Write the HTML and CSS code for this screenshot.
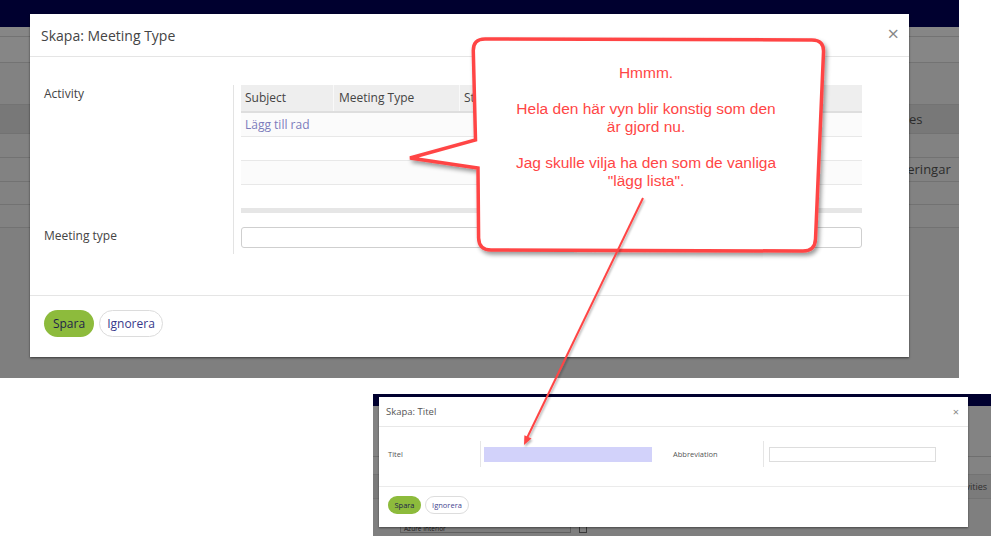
FILE: index.html
```html
<!DOCTYPE html>
<html lang="sv">
<head>
<meta charset="utf-8">
<title>Skapa: Meeting Type</title>
<link rel="stylesheet" href="styles.css">
</head>
<body>
<div class="canvas">

  <section class="shot shot-main">
    <div class="page">
      <div class="topbar"></div>
      <div class="pbar pbar-a"></div>
      <div class="pbar pbar-b"></div>
      <div class="pbar pbar-c"></div>
      <div class="prow prow-head"><span class="pcell pcell-act">Activities</span></div>
      <div class="prow"></div>
      <div class="prow"><span class="pcell pcell-not">Noteringar</span></div>
      <div class="prow prow-short"></div>
      <div class="prow prow-short"></div>
    </div>

    <div class="modal">
      <div class="modal-header">
        <h4 class="modal-title">Skapa: Meeting Type</h4>
        <span class="close">&times;</span>
      </div>
      <div class="modal-body">
        <div class="form-row">
          <div class="form-label">Activity</div>
          <div class="form-field field-grid">
            <div class="grid">
              <div class="grid-head">
                <div class="gh gh-subject">Subject</div>
                <div class="gh gh-type">Meeting Type</div>
                <div class="gh gh-rest">Status</div>
              </div>
              <div class="grid-row grid-row-a"><a class="add-row">Lägg till rad</a></div>
              <div class="grid-row"></div>
              <div class="grid-row grid-row-a"></div>
              <div class="grid-row grid-row-last"></div>
              <div class="grid-foot"></div>
            </div>
          </div>
        </div>
        <div class="form-row">
          <div class="form-label">Meeting type</div>
          <div class="form-field field-input">
            <div class="input"></div>
          </div>
        </div>
      </div>
      <div class="modal-footer">
        <button class="btn btn-primary">Spara</button>
        <button class="btn btn-default">Ignorera</button>
      </div>
    </div>
  </section>

  <section class="shot shot-sub">
    <div class="page2">
      <div class="topbar2"></div>
      <div class="p2bar"></div>
      <div class="p2row"></div>
      <div class="p2row p2row-head"><span class="p2cell">Activities</span></div>
      <div class="p2rest">
        <div class="p2input">Azure Interior</div>
        <div class="p2icon"></div>
      </div>
    </div>

    <div class="modal2">
      <div class="m2-header">
        <span class="m2-title">Skapa: Titel</span>
        <span class="m2-close">&times;</span>
      </div>
      <div class="m2-body">
        <div class="m2-label">Titel</div>
        <div class="m2-field"><div class="m2-input m2-input-active"></div></div>
        <div class="m2-label m2-label-2">Abbreviation</div>
        <div class="m2-field m2-field-2"><div class="m2-input"></div></div>
      </div>
      <div class="m2-footer">
        <button class="m2-btn m2-btn-primary">Spara</button>
        <button class="m2-btn m2-btn-default">Ignorera</button>
      </div>
    </div>
  </section>

  <svg class="annot" width="991" height="536" viewBox="0 0 991 536" aria-hidden="true">
    <defs>
      <filter id="shadow" x="-10%" y="-10%" width="130%" height="130%">
        <feDropShadow dx="2" dy="3" stdDeviation="2" flood-color="#000" flood-opacity="0.4"/>
      </filter>
      <filter id="lshadow" x="-20%" y="-5%" width="140%" height="110%">
        <feDropShadow dx="1" dy="2" stdDeviation="1.2" flood-color="#000" flood-opacity="0.3"/>
      </filter>
    </defs>
    <path filter="url(#shadow)" fill="#ffffff" stroke="#ff4545" stroke-width="3.5"
      d="M485,39 L812,40 Q824,40 823.5,52 L815.5,239 Q815,251 803,251 L491,250 Q479,250 478.6,238 L478,168 L410,158 L475.5,140 L473.3,51 Q473,39 485,39 Z"/>
    <g filter="url(#lshadow)">
      <line x1="643" y1="198" x2="527" y2="438" stroke="#ff4545" stroke-width="2"/>
      <polygon points="524,445 531.5,438.6 524.4,435.2" fill="#ff4545"/>
    </g>
  </svg>

  <div class="callout-text">
    <p>Hmmm.</p>
    <p>Hela den här vyn blir konstig som den<br>är gjord nu.</p>
    <p>Jag skulle vilja ha den som de vanliga<br>"lägg lista".</p>
  </div>

</div>
</body>
</html>
```

FILE: styles.css
```css
* { box-sizing: border-box; }

html, body {
  margin: 0;
  padding: 0;
}

body {
  width: 991px;
  height: 536px;
  overflow: hidden;
  background: #ffffff;
  font-family: "Open Sans", "DejaVu Sans", sans-serif;
}

.canvas {
  position: relative;
  width: 991px;
  height: 536px;
}

.shot {
  position: absolute;
  overflow: hidden;
}

/* ---------- main screenshot ---------- */
.shot-main {
  left: 0;
  top: 0;
  width: 959px;
  height: 378px;
  background: #7f7f7f;
}

.topbar {
  height: 27px;
  background: #00002f;
}

.pbar {
  background: #868686;
  border-bottom: 1px solid #737373;
}
.pbar-a { height: 10px; }
.pbar-b { height: 26px; }
.pbar-c { height: 42px; background: #828282; }

.prow {
  height: 24px;
  background: #828282;
  border-bottom: 1px solid #727272;
  font-size: 13px;
  line-height: 23px;
  color: #2c2c2c;
  white-space: nowrap;
}
.prow-head {
  height: 29px;
  line-height: 28px;
  background: #787878;
}
.prow-short { height: 23px; }

.pcell-act { padding-left: 869px; }
.pcell-not { padding-left: 885px; }

.modal {
  position: absolute;
  left: 30px;
  top: 14px;
  width: 879px;
  height: 343px;
  background: #ffffff;
  box-shadow: 0 1px 2px rgba(0, 0, 0, 0.55);
}

.modal-header {
  height: 43px;
  border-bottom: 1px solid #e5e5e5;
  display: flex;
  align-items: center;
  justify-content: space-between;
  padding: 0 10px 0 11px;
}

.modal-title {
  margin: 0;
  font-size: 14px;
  font-weight: 400;
  color: #444444;
}

.close {
  font-size: 20px;
  line-height: 1;
  color: #888888;
  margin-top: -3px;
}

.modal-body {
  padding: 28px 47px 41px 14px;
}

.form-row {
  display: flex;
}

.form-label {
  width: 189px;
  flex: none;
  font-size: 12px;
  line-height: 18px;
  color: #444444;
}

.form-field {
  flex: 1;
  border-left: 1px solid #e3e3e3;
  padding-left: 7px;
}
.field-grid { padding-bottom: 14px; }
.field-input { padding-bottom: 6px; }

.grid-head {
  display: flex;
  height: 28px;
  background: #eeeeee;
  border-bottom: 2px solid #dedede;
}

.gh {
  padding-left: 4px;
  font-size: 12px;
  line-height: 26px;
  color: #444444;
  border-right: 1px solid #f9f9f9;
}
.gh-subject { width: 93px; }
.gh-type { width: 126px; padding-left: 5px; }
.gh-rest { flex: 1; border-right: none; }

.grid-row {
  height: 24px;
  border-bottom: 1px solid #e8e8e8;
  background: #ffffff;
  padding-left: 4px;
  font-size: 12px;
  line-height: 23px;
}
.grid-row-a { background: #fbfbfb; }
.grid-row-last { height: 23px; border-bottom: none; }

.add-row {
  color: #7b7bbb;
  text-decoration: none;
}

.grid-foot {
  height: 5px;
  background: #e6e6e6;
}

.input {
  height: 21px;
  border: 1px solid #cfcfcf;
  border-radius: 3px;
  background: #ffffff;
}

.modal-footer {
  border-top: 1px solid #e5e5e5;
  padding: 14px 14px;
  display: flex;
  gap: 5px;
}

.btn {
  height: 27px;
  border-radius: 14px;
  padding: 0;
  font-family: "Open Sans", sans-serif;
  font-size: 12px;
}

.btn-primary {
  width: 50px;
  background: #8dbb3c;
  border: none;
  color: #1f1f4a;
}

.btn-default {
  width: 64px;
  background: #ffffff;
  border: 1px solid #dcdcdc;
  color: #38388a;
}

/* ---------- secondary screenshot ---------- */
.shot-sub {
  left: 373px;
  top: 394px;
  width: 618px;
  height: 142px;
  background: #7f7f7f;
}

.topbar2 {
  height: 12px;
  background: #00002f;
}

.p2bar {
  height: 51px;
  background: #838383;
  border-bottom: 1px solid #6f6f6f;
}

.p2row {
  height: 18px;
  background: #838383;
  border-bottom: 1px solid #737373;
}

.p2row-head {
  height: 24px;
  background: #7b7b7b;
  font-size: 9px;
  line-height: 23px;
  color: #2e2e2e;
  white-space: nowrap;
}
.p2cell { padding-left: 577px; }

.p2rest {
  display: flex;
  align-items: flex-start;
  padding: 25px 0 0 27px;
}

.p2input {
  width: 171px;
  height: 9px;
  border: 1px solid #606060;
  background: #7d7d7d;
  font-size: 6.5px;
  line-height: 7px;
  padding-left: 3px;
  color: #1e1e1e;
}

.p2icon {
  width: 8px;
  height: 8px;
  margin: 1px 0 0 8px;
  border: 1px solid #3a3a3a;
}

.modal2 {
  position: absolute;
  left: 6px;
  top: 3px;
  width: 589px;
  height: 130px;
  background: #ffffff;
  box-shadow: 0 1px 2px rgba(0, 0, 0, 0.45);
}

.m2-header {
  height: 30px;
  border-bottom: 1px solid #e8e8e8;
  display: flex;
  align-items: center;
  justify-content: space-between;
  padding: 0 9px 0 7px;
}

.m2-title {
  font-size: 9.5px;
  color: #555555;
}

.m2-close {
  font-size: 11px;
  color: #888888;
}

.m2-body {
  height: 59px;
  display: flex;
  align-items: stretch;
  padding: 14px 0 19px 9px;
}

.m2-label {
  width: 92px;
  font-size: 7.5px;
  line-height: 26px;
  color: #555555;
}
.m2-label-2 {
  width: 90px;
  margin-left: 21px;
}

.m2-field {
  display: flex;
  align-items: center;
  border-left: 1px solid #e6e6e6;
  padding-left: 3px;
}
.m2-field-2 { padding-left: 5px; }

.m2-input {
  width: 168px;
  height: 15px;
  border: 1px solid #dddddd;
  background: #ffffff;
}
.m2-field-2 .m2-input { width: 167px; }

.m2-input-active {
  border: none;
  background: #d2d2fa;
}

.m2-footer {
  border-top: 1px solid #ebebeb;
  padding: 9px 9px;
  display: flex;
  gap: 4px;
}

.m2-btn {
  height: 18px;
  border-radius: 9px;
  padding: 0;
  font-family: "Open Sans", sans-serif;
  font-size: 7.5px;
}

.m2-btn-primary {
  width: 33px;
  background: #8dbb3c;
  border: none;
  color: #1f1f4a;
}

.m2-btn-default {
  width: 44px;
  background: #ffffff;
  border: 1px solid #dddddd;
  color: #45458f;
}

/* ---------- annotation ---------- */
.annot {
  position: absolute;
  left: 0;
  top: 0;
  pointer-events: none;
}

.callout-text {
  position: absolute;
  left: 476px;
  top: 64px;
  width: 340px;
  text-align: center;
  font-family: "Liberation Sans", Arial, sans-serif;
  font-size: 15.5px;
  line-height: 18px;
  color: #ff4646;
}

.callout-text p {
  margin: 0 0 18px 0;
}
```
